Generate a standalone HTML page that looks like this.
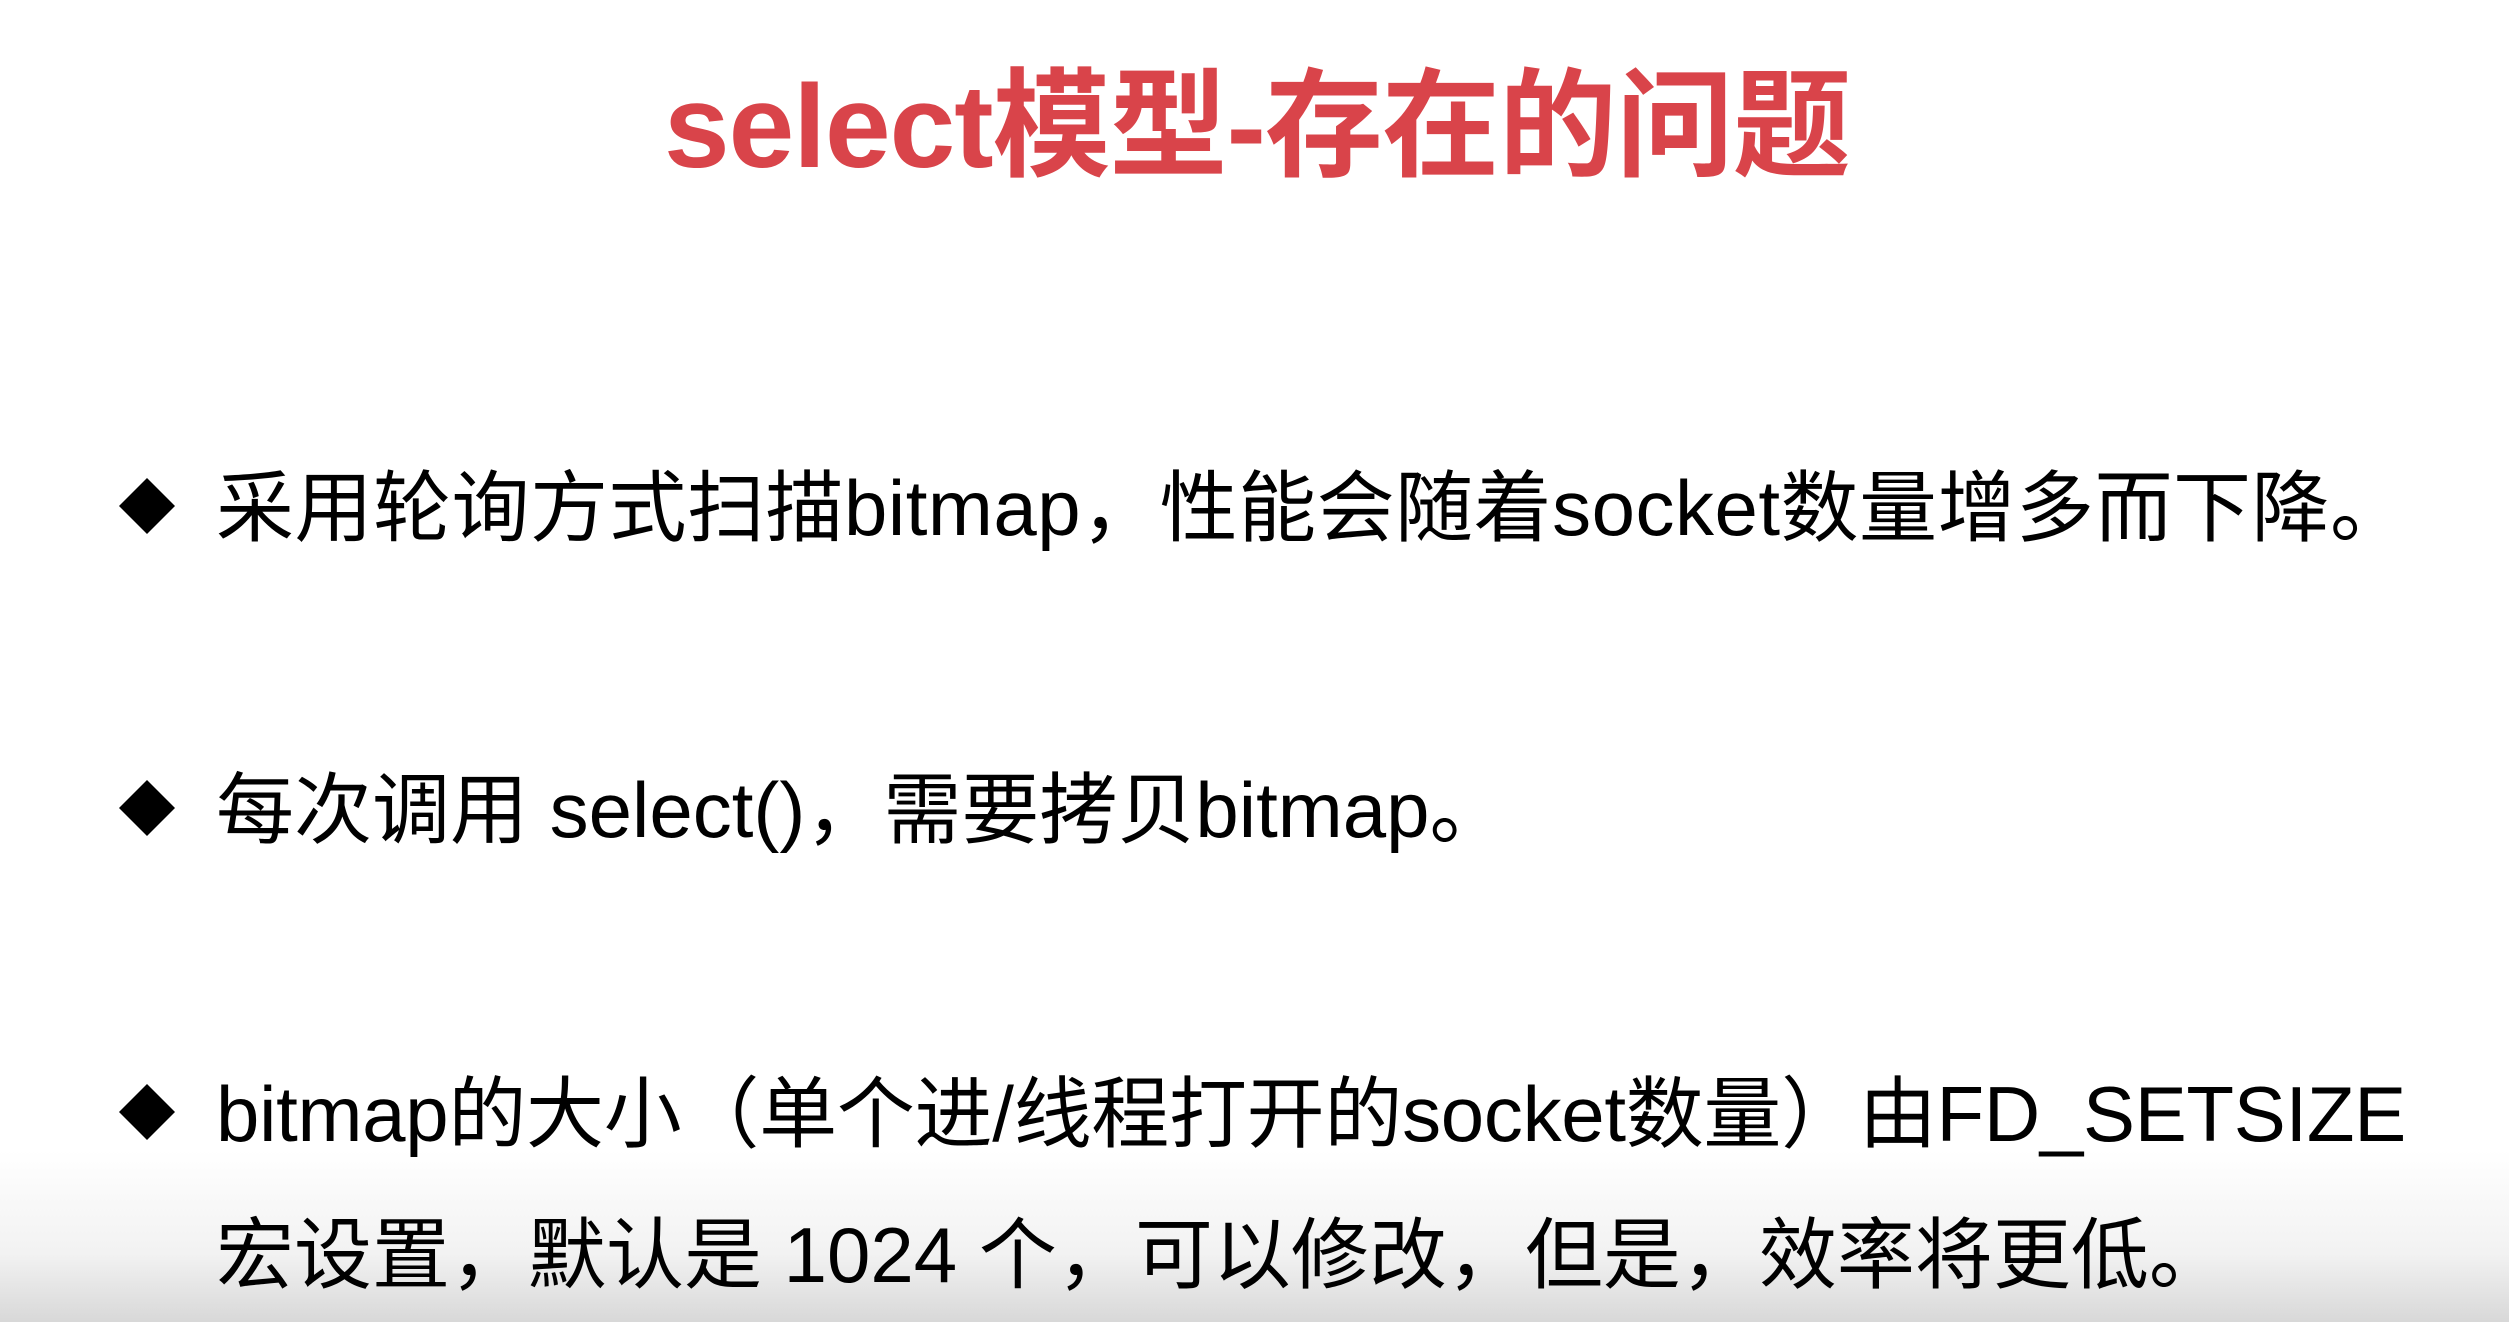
<!DOCTYPE html>
<html><head><meta charset="utf-8"><style>
html,body{margin:0;padding:0;}
body{width:2509px;height:1322px;position:relative;overflow:hidden;background:#fff;
font-family:"Liberation Sans","Noto Sans CJK SC",sans-serif;}
.bg{position:absolute;left:0;right:0;top:1150px;bottom:0;background:linear-gradient(#fff,#f2f2f2 60%,#d8d8d8);}
.t{position:absolute;white-space:nowrap;}
#title{left:664px;top:52px;font-size:118px;line-height:150px;font-weight:bold;color:#d9444a;letter-spacing:-1px;}
.l{font-size:78px;line-height:100px;color:#000;left:216px;}
.d{position:absolute;width:60px;height:60px;}
</style></head><body>
<div class="bg"></div>
<div class="t" id="title">select模型-存在的问题</div>
<svg class="d" style="left:117px;top:476px" viewBox="0 0 60 60"><polygon points="30,2 58,30 30,58 2,30" fill="#000"/></svg>
<svg class="d" style="left:117px;top:778px" viewBox="0 0 60 60"><polygon points="30,2 58,30 30,58 2,30" fill="#000"/></svg>
<svg class="d" style="left:117px;top:1082px" viewBox="0 0 60 60"><polygon points="30,2 58,30 30,58 2,30" fill="#000"/></svg>
<div class="t l" style="top:458px;letter-spacing:0.5px">采用轮询方式扫描bitmap，性能会随着socket数量增多而下降。</div>
<div class="t l" style="top:760px">每次调用 select()，需要拷贝bitmap。</div>
<div class="t l" style="top:1064px;letter-spacing:-0.3px">bitmap的大小（单个进/线程打开的socket数量）由FD_SETSIZE</div>
<div class="t l" style="top:1205px">宏设置，默认是 1024 个，可以修改，但是，效率将更低。</div>
</body></html>
